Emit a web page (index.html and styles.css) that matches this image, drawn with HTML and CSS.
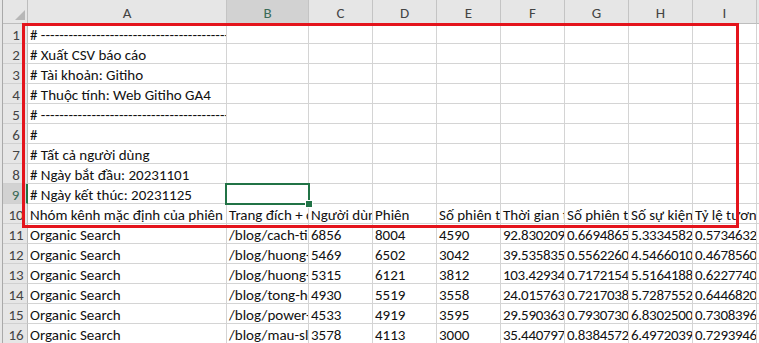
FILE: index.html
```html
<!DOCTYPE html>
<html lang="vi">
<head>
<meta charset="utf-8">
<title>Excel</title>
<link rel="stylesheet" href="styles.css">
</head>
<body>
<div class="sheet">
  <div class="grid">
    <div class="corner"><svg class="tri" width="10" height="10" viewBox="0 0 10 10"><polygon points="10,0 10,10 0,10" fill="#b7b7b7"/></svg></div>
    <div class="ch">A</div><div class="ch sel">B</div><div class="ch">C</div><div class="ch">D</div><div class="ch">E</div><div class="ch">F</div><div class="ch">G</div><div class="ch">H</div><div class="ch">I</div><div class="ch">J</div>

    <div class="rh">1</div><div class="c"># ------------------------------------------------------</div><div class="c"></div><div class="c"></div><div class="c"></div><div class="c"></div><div class="c"></div><div class="c"></div><div class="c"></div><div class="c"></div><div class="c"></div>
    <div class="rh">2</div><div class="c"># Xuất CSV báo cáo</div><div class="c"></div><div class="c"></div><div class="c"></div><div class="c"></div><div class="c"></div><div class="c"></div><div class="c"></div><div class="c"></div><div class="c"></div>
    <div class="rh">3</div><div class="c"># Tài khoản: Gitiho</div><div class="c"></div><div class="c"></div><div class="c"></div><div class="c"></div><div class="c"></div><div class="c"></div><div class="c"></div><div class="c"></div><div class="c"></div>
    <div class="rh">4</div><div class="c"># Thuộc tính: Web Gitiho GA4</div><div class="c"></div><div class="c"></div><div class="c"></div><div class="c"></div><div class="c"></div><div class="c"></div><div class="c"></div><div class="c"></div><div class="c"></div>
    <div class="rh">5</div><div class="c"># ------------------------------------------------------</div><div class="c"></div><div class="c"></div><div class="c"></div><div class="c"></div><div class="c"></div><div class="c"></div><div class="c"></div><div class="c"></div><div class="c"></div>
    <div class="rh">6</div><div class="c">#</div><div class="c"></div><div class="c"></div><div class="c"></div><div class="c"></div><div class="c"></div><div class="c"></div><div class="c"></div><div class="c"></div><div class="c"></div>
    <div class="rh">7</div><div class="c"># Tất cả người dùng</div><div class="c"></div><div class="c"></div><div class="c"></div><div class="c"></div><div class="c"></div><div class="c"></div><div class="c"></div><div class="c"></div><div class="c"></div>
    <div class="rh">8</div><div class="c"># Ngày bắt đầu: 20231101</div><div class="c"></div><div class="c"></div><div class="c"></div><div class="c"></div><div class="c"></div><div class="c"></div><div class="c"></div><div class="c"></div><div class="c"></div>
    <div class="rh rsel">9</div><div class="c"># Ngày kết thúc: 20231125</div><div class="c"></div><div class="c"></div><div class="c"></div><div class="c"></div><div class="c"></div><div class="c"></div><div class="c"></div><div class="c"></div><div class="c"></div>
    <div class="rh">10</div><div class="c">Nhóm kênh mặc định của phiên</div><div class="c">Trang đích + chuỗi truy vấn</div><div class="c">Người dùng</div><div class="c">Phiên</div><div class="c">Số phiên tương tác</div><div class="c">Thời gian tương tác trung bình</div><div class="c">Số phiên tương tác trên mỗi người dùng</div><div class="c">Số sự kiện trên mỗi phiên</div><div class="c">Tỷ lệ tương tác</div><div class="c"></div>
    <div class="rh">11</div><div class="c">Organic Search</div><div class="c">/blog/cach-tinh-phan-tram</div><div class="c">6856</div><div class="c">8004</div><div class="c">4590</div><div class="c num">92.830209000</div><div class="c num">0.66948658</div><div class="c num">5.33345827</div><div class="c num">0.57346326</div><div class="c"></div>
    <div class="rh">12</div><div class="c">Organic Search</div><div class="c">/blog/huong-dan-vlookup</div><div class="c">5469</div><div class="c">6502</div><div class="c">3042</div><div class="c num">39.535835000</div><div class="c num">0.55622600</div><div class="c num">4.54660100</div><div class="c num">0.46785600</div><div class="c"></div>
    <div class="rh">13</div><div class="c">Organic Search</div><div class="c">/blog/huong-dan-pivot</div><div class="c">5315</div><div class="c">6121</div><div class="c">3812</div><div class="c num">103.42934000</div><div class="c num">0.71721540</div><div class="c num">5.51641880</div><div class="c num">0.62277400</div><div class="c"></div>
    <div class="rh">14</div><div class="c">Organic Search</div><div class="c">/blog/tong-hop-ham</div><div class="c">4930</div><div class="c">5519</div><div class="c">3558</div><div class="c num">24.015763000</div><div class="c num">0.72170380</div><div class="c num">5.72875520</div><div class="c num">0.64468200</div><div class="c"></div>
    <div class="rh">15</div><div class="c">Organic Search</div><div class="c">/blog/power-query</div><div class="c">4533</div><div class="c">4919</div><div class="c">3595</div><div class="c num">29.590363000</div><div class="c num">0.79307300</div><div class="c num">6.83025000</div><div class="c num">0.73083960</div><div class="c"></div>
    <div class="rh">16</div><div class="c">Organic Search</div><div class="c">/blog/mau-slide</div><div class="c">3578</div><div class="c">4113</div><div class="c">3000</div><div class="c num">35.440797000</div><div class="c num">0.83845720</div><div class="c num">6.49720390</div><div class="c num">0.72939460</div><div class="c"></div>
  </div>
  <div class="selbox"><span class="handle"></span></div>
  <div class="redbox"></div>
</div>
</body>
</html>
```
FILE: styles.css
```css
html, body {
  margin: 0;
  padding: 0;
  background: #ffffff;
  overflow: hidden;
}
.sheet {
  position: relative;
  width: 759px;
  height: 343px;
  overflow: hidden;
  background: #e6e6e6;
  padding-left: 3px;
  box-sizing: border-box;
  font-family: Carlito, Calibri, Lato, "Liberation Sans", sans-serif;
  font-size: 15px;
  color: #111;
}
.sheet::before {
  content: "";
  position: absolute;
  left: 2px;
  top: 0;
  bottom: 0;
  width: 1px;
  background: #a9a9a9;
}
.grid {
  display: grid;
  grid-template-columns: 25px 199px 82px 64px 64px 64px 64px 64px 64px 64px 64px;
  grid-template-rows: 24px repeat(16, 20px);
  background: #ffffff;
}
.corner {
  background: #e6e6e6;
  border-right: 1px solid #bdbdbd;
  border-bottom: 1px solid #bdbdbd;
  box-sizing: border-box;
  display: flex;
  align-items: flex-end;
  justify-content: flex-end;
  padding: 0 2px 3px 0;
}
.ch {
  background: #e6e6e6;
  border-right: 1px solid #c4c4c4;
  border-bottom: 1px solid #bdbdbd;
  box-sizing: border-box;
  display: flex;
  align-items: center;
  justify-content: center;
  color: #444;
  font-size: 15px;
  padding-top: 3px;
}
.ch.sel {
  background: #d2d2d2;
  color: #3b6b58;
}
.rh {
  background: #e6e6e6;
  border-right: 1px solid #bdbdbd;
  border-bottom: 1px solid #d0d0d0;
  box-sizing: border-box;
  display: flex;
  align-items: center;
  justify-content: center;
  color: #444;
  font-size: 15px;
  padding-top: 2px;
  padding-left: 2px;
}
.rh.rsel {
  background: #d2d2d2;
  border-right: 2px solid #217346;
  color: #3b6b58;
}
.c {
  border-right: 1px solid #d4d4d4;
  border-bottom: 1px solid #d4d4d4;
  box-sizing: border-box;
  white-space: nowrap;
  overflow: hidden;
  padding: 2px 0 0 2px;
  line-height: 18px;
}
.num {
  letter-spacing: -0.3px;
}
.selbox {
  position: absolute;
  left: 225px;
  top: 183px;
  width: 85px;
  height: 22px;
  border: 2px solid #217346;
  box-sizing: border-box;
}
.handle {
  position: absolute;
  right: -5px;
  bottom: -5px;
  width: 6px;
  height: 6px;
  background: #217346;
  border: 1px solid #ffffff;
}
.redbox {
  position: absolute;
  left: 22px;
  top: 23px;
  width: 717px;
  height: 205px;
  border: 3px solid #e4141c;
  box-sizing: border-box;
}
```
